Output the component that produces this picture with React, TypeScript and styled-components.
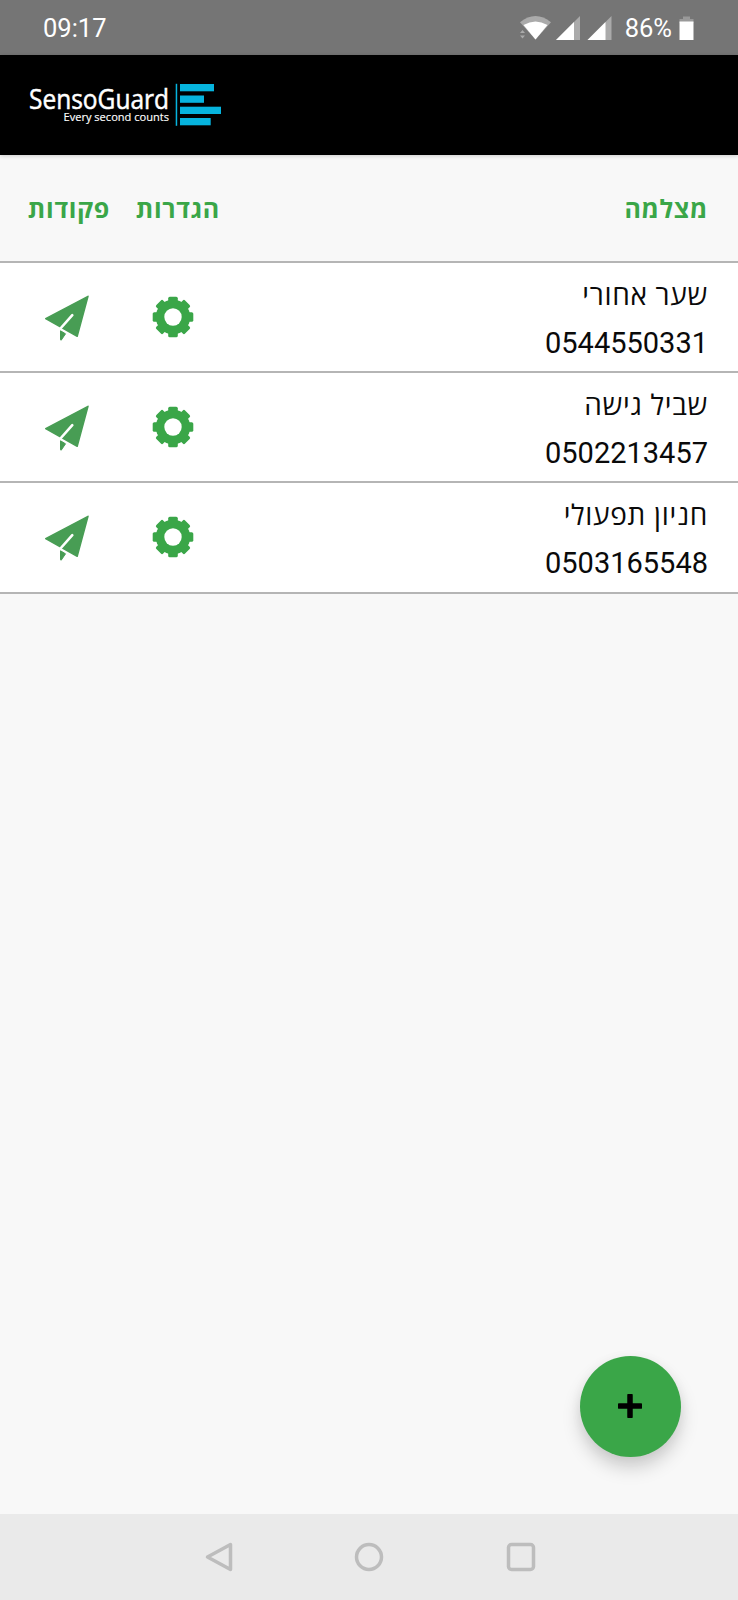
import React from "react";
import styled, { createGlobalStyle } from "styled-components";

const GlobalStyle = createGlobalStyle`
  *, *::before, *::after { box-sizing: border-box; }
  body { margin: 0; background: #f8f8f8; }
  svg { display: block; flex: none; }
`;

const green = "#3aa648";
const hebrew = `"Open Sans", "Noto Sans", "Liberation Sans", sans-serif`;

const Screen = styled.div`
  display: flex;
  flex-direction: column;
  width: 738px;
  height: 1600px;
  background: #f8f8f8;
  font-family: Roboto, sans-serif;
`;

const StatusBar = styled.div`
  display: flex;
  align-items: center;
  justify-content: space-between;
  flex: none;
  height: 55px;
  padding: 0 44px 0 43px;
  background: #757575;
  color: #fff;
  font-size: 25.5px;
`;

const StatusGroup = styled.div`
  display: flex;
  align-items: center;
`;

const Battery = styled.span`
  margin: 0 7px 0 13px;
`;

const AppBar = styled.header`
  display: flex;
  align-items: center;
  flex: none;
  height: 100px;
  padding-left: 28px;
  background: #000;
  box-shadow: 0 1px 4px rgba(0, 0, 0, 0.18);
`;

const Columns = styled.div`
  display: grid;
  grid-template-columns: 137px 110px 1fr;
  padding-right: 30px;
`;

const TableHead = styled(Columns)`
  flex: none;
  height: 108px;
  align-items: center;
  border-bottom: 2px solid #b5b5b5;
`;

const HeadCell = styled.div<{ $indent?: number }>`
  direction: rtl;
  padding-right: ${(p) => p.$indent ?? 0}px;
  color: ${green};
  font: 700 25px/36px ${hebrew};
  letter-spacing: 0.7px;
  white-space: nowrap;
`;

const Row = styled(Columns)`
  flex: none;
  height: 110.2px;
  background: #fff;
  border-bottom: 2px solid #b5b5b5;
`;

const IconButton = styled.button<{ $left: number; $drop?: number }>`
  align-self: center;
  justify-self: start;
  margin: ${(p) => p.$drop ?? 0}px 0 0 ${(p) => p.$left}px;
  padding: 0;
  border: 0;
  background: none;
`;

const Camera = styled.div`
  display: flex;
  flex-direction: column;
  align-items: flex-end;
  padding-top: 7px;
  color: #0a0a0a;
`;

const CameraName = styled.div`
  direction: rtl;
  height: 49px;
  font: 400 28px/48px ${hebrew};
  letter-spacing: 0.7px;
`;

const Phone = styled.div`
  font-size: 29px;
  line-height: 48px;
`;

const Content = styled.main`
  display: flex;
  flex: 1;
  align-items: flex-end;
  justify-content: flex-end;
  padding: 0 57.5px 57.5px 0;
`;

const AddButton = styled.button`
  display: flex;
  align-items: center;
  justify-content: center;
  width: 101px;
  height: 101px;
  padding: 0;
  border: 0;
  border-radius: 50%;
  background: ${green};
  box-shadow: 0 11px 18px rgba(0, 0, 0, 0.17), 0 2px 12px rgba(0, 0, 0, 0.05);
`;

const NavBar = styled.nav`
  display: flex;
  justify-content: center;
  gap: 121.5px;
  flex: none;
  height: 86px;
  padding-top: 27.5px;
  background: #eaeaea;
`;

const Logo = () => (
  <svg width="196" height="50" viewBox="28 80 196 50">
    <g fill="#fff" stroke="#fff" fontFamily="'Open Sans', sans-serif">
      <text x="29" y="108.5" fontSize="27" strokeWidth="0.5" textLength="140" lengthAdjust="spacingAndGlyphs">SensoGuard</text>
      <text x="63.500" y="120.5" fontSize="11.5" strokeWidth="0.15" textLength="105.500" lengthAdjust="spacingAndGlyphs">Every second counts</text>
    </g>
    <g fill="#06b4de">
      <rect x="175.7" y="83.8" width="1.5" height="42" />
      <rect x="180" y="84" width="34" height="7.3" />
      <rect x="180" y="95.5" width="24" height="7.3" />
      <rect x="180" y="106.7" width="41" height="7.3" />
      <rect x="180" y="118" width="30.7" height="7.3" />
    </g>
  </svg>
);

const Signals = () => (
  <svg width="93" height="28" viewBox="519 14 93 28">
    <path d="M520 22.3Q535.500 9.500 551 22.300L535.500 39.500Z" fill="#aaa" />
    <path d="M523.500 25Q535.500 18 547.500 25L535.500 39.500Z" fill="#fff" />
    <path d="M520 33l2.500-3 2.500 3zM520 35.500h5l-2.500 3z" fill="#aaa" />
    <path d="M556 40L580 16V40Z M587.500 40L611.500 16V40Z" fill="#aaa" />
    <path d="M556 40L574 22V40Z M587.500 40L605.500 22V40Z" fill="#fff" />
  </svg>
);

const BatteryIcon = () => (
  <svg width="15" height="26" viewBox="0 0 15 26">
    <path d="M4 1.500h7V4h3.500v4H.5V4H4z" fill="#999" />
    <path d="M.5 6.500h14v18.500H.5z" fill="#fff" />
  </svg>
);

const Plane = () => (
  <svg width="46" height="48" viewBox="44 293 46 48">
    <path d="M88 295.300L45.700 317.700L77.200 335.300Z" fill="#489d54" stroke="#489d54" strokeWidth="1.500" strokeLinejoin="round" />
    <path d="M72.300 314.200L60 328" stroke="#fff" strokeWidth="2.600" strokeLinecap="round" />
    <path d="M60.500 329.800L65.500 332.800L61.200 339.200L60.500 338.800Z" fill="#489d54" stroke="#489d54" strokeLinejoin="round" />
  </svg>
);

const Gear = () => (
  <svg width="42" height="42" viewBox="-21 -21 42 42">
    <g fill={green}>
      {[0, 45, 90, 135].map((a) => (
        <rect key={a} x="-4.800" y="-20.300" width="9.600" height="40.600" rx="1.600" transform={`rotate(${a})`} />
      ))}
      <circle r="17.300" />
    </g>
    <circle r="8.700" fill="#fff" />
  </svg>
);

const cameras = [
  { name: "שער אחורי", phone: "0544550331" },
  { name: "שביל גישה", phone: "0502213457" },
  { name: "חניון תפעולי", phone: "0503165548" },
];

export default function App() {
  return (
    <Screen>
      <GlobalStyle />
      <StatusBar>
        <span>09:17</span>
        <StatusGroup>
          <Signals />
          <Battery>86%</Battery>
          <BatteryIcon />
        </StatusGroup>
      </StatusBar>
      <AppBar>
        <Logo />
      </AppBar>
      <TableHead>
        <HeadCell $indent={27}>פקודות</HeadCell>
        <HeadCell $indent={27}>הגדרות</HeadCell>
        <HeadCell>מצלמה</HeadCell>
      </TableHead>
      {cameras.map((c) => (
        <Row key={c.phone}>
          <IconButton $left={44} $drop={1.5} aria-label="פקודות"><Plane /></IconButton>
          <IconButton $left={15} aria-label="הגדרות"><Gear /></IconButton>
          <Camera>
            <CameraName>{c.name}</CameraName>
            <Phone>{c.phone}</Phone>
          </Camera>
        </Row>
      ))}
      <Content>
        <AddButton aria-label="+">
          <svg width="24" height="24" viewBox="0 0 24 24">
            <path d="M12 1.500V22.500M1.500 12H22.500" stroke="#000" strokeWidth="5.500" strokeLinecap="round" />
          </svg>
        </AddButton>
      </Content>
      <NavBar>
        <svg width="30" height="30" viewBox="0 0 30 30" fill="none" stroke="#bdbdbd" strokeWidth="3.500" strokeLinejoin="round">
          <path d="M4.500 15L27.500 2.500V27.500Z" />
        </svg>
        <svg width="30" height="30" viewBox="0 0 30 30" fill="none" stroke="#bdbdbd" strokeWidth="3.500">
          <circle cx="15" cy="15" r="12.500" />
        </svg>
        <svg width="30" height="30" viewBox="0 0 30 30" fill="none" stroke="#bdbdbd" strokeWidth="3.500">
          <rect x="2.500" y="2.500" width="25" height="25" rx="3" />
        </svg>
      </NavBar>
    </Screen>
  );
}
